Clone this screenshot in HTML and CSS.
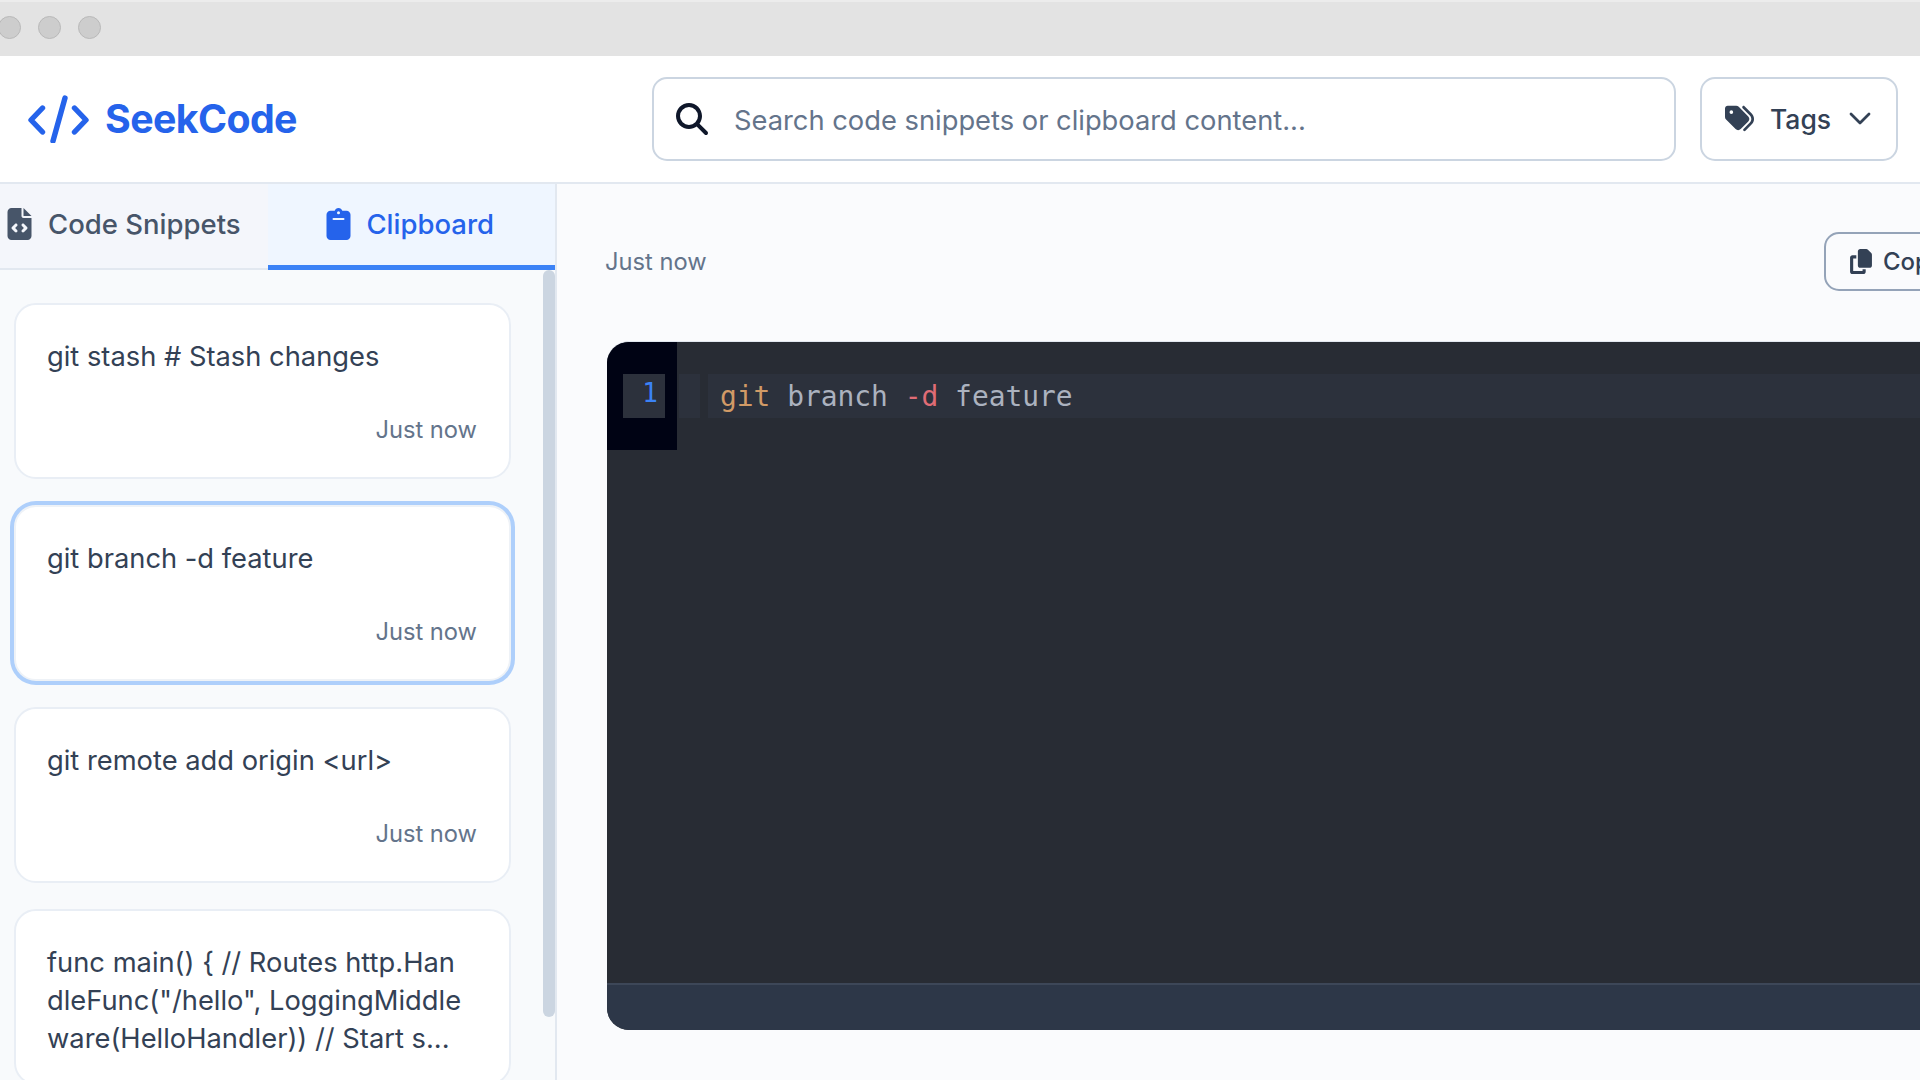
FILE: index.html
```html
<!DOCTYPE html>
<html lang="en">
<head>
<meta charset="utf-8">
<title>SeekCode</title>
<link rel="stylesheet" href="styles.css">
</head>
<body>
<div class="titlebar">
  <span class="light"></span><span class="light"></span><span class="light"></span>
</div>
<header class="header">
  <div class="brand">
    <svg class="logo" viewBox="0 0 61 48" fill="none" stroke="#2563eb" stroke-width="5.400" stroke-linecap="round" stroke-linejoin="round"><path d="M14.500 13 3 25l11.500 12"/><path d="M46.500 13 58 25 46.500 37"/><path d="M37 3 25 46"/></svg>
    <span class="brand-name">SeekCode</span>
  </div>
  <div class="search">
    <svg class="search-icon" viewBox="0 0 512 512"><path d="M416 208c0 45.900-14.900 88.300-40 122.700L502.600 457.400c12.500 12.500 12.500 32.800 0 45.300s-32.800 12.500-45.300 0L330.700 376c-34.400 25.200-76.800 40-122.700 40C93.100 416 0 322.900 0 208S93.100 0 208 0S416 93.100 416 208zM208 352a144 144 0 1 0 0-288 144 144 0 1 0 0 288z"/></svg>
    <input class="search-input" type="text" placeholder="Search code snippets or clipboard content...">
  </div>
  <button class="tags">
    <svg class="tags-icon" viewBox="0 0 512 512"><path d="M345 39.100L472.800 168.400c52.400 53 52.400 138.200 0 191.200L360.800 472.900c-9.300 9.400-24.500 9.500-33.900 .2s-9.500-24.500-.2-33.900L438.600 325.900c33.900-34.300 33.900-89.400 0-123.700L310.900 72.900c-9.300-9.400-9.200-24.600 .2-33.900s24.600-9.200 33.900 .2zM0 229.500V80C0 53.500 21.500 32 48 32H197.500c17 0 33.300 6.700 45.300 18.700l168 168c25 25 25 65.500 0 90.500L277.300 442.700c-25 25-65.500 25-90.500 0l-168-168C6.700 262.700 0 246.500 0 229.500zM144 144a32 32 0 1 0-64 0 32 32 0 1 0 64 0z"/></svg>
    <span>Tags</span>
    <svg class="chevron" viewBox="0 0 22 13" fill="none" stroke="#334155" stroke-width="2.800" stroke-linecap="round" stroke-linejoin="round"><path d="M2 2l9 9 9-9"/></svg>
  </button>
</header>
<div class="body">
  <aside class="sidebar">
    <nav class="tabs">
      <div class="tab tab-first">
        <svg class="tab-icon" viewBox="0 0 384 512" fill="#475569"><path d="M64 0C28.700 0 0 28.700 0 64V448c0 35.300 28.700 64 64 64H320c35.300 0 64-28.700 64-64V160H256c-17.700 0-32-14.300-32-32V0H64zM256 0V128H384L256 0zM153 289l-31 31 31 31c9.400 9.400 9.400 24.600 0 33.900s-24.600 9.400-33.900 0L71 337c-9.400-9.400-9.400-24.600 0-33.900l48-48c9.400-9.400 24.600-9.400 33.900 0s9.400 24.600 0 33.900zM265 255l48 48c9.400 9.400 9.400 24.600 0 33.900l-48 48c-9.400 9.400-24.600 9.400-33.900 0s-9.400-24.600 0-33.900l31-31-31-31c-9.400-9.400-9.400-24.600 0-33.900s24.600-9.400 33.900 0z"/></svg>
        <span>Code Snippets</span>
      </div>
      <div class="tab tab-active">
        <svg class="tab-icon" viewBox="0 0 384 512" fill="#2563eb"><path fill-rule="evenodd" d="M192 0c-29 0-53 19-61 45H64C29 45 0 74 0 109v339c0 35 29 64 64 64h256c35 0 64-29 64-64V109c0-35-29-64-64-64h-67C245 19 221 0 192 0zm0 52a24 24 0 1 1 0 48 24 24 0 0 1 0-48zM112 160h160a16 16 0 0 1 0 32H112a16 16 0 0 1 0-32z"/></svg>
        <span>Clipboard</span>
      </div>
    </nav>
    <div class="list-area">
      <div class="list">
        <article class="card">
          <p class="card-text">git stash # Stash changes</p>
          <p class="card-time">Just now</p>
        </article>
        <article class="card card-selected">
          <p class="card-text">git branch -d feature</p>
          <p class="card-time">Just now</p>
        </article>
        <article class="card">
          <p class="card-text">git remote add origin &lt;url&gt;</p>
          <p class="card-time">Just now</p>
        </article>
        <article class="card">
          <p class="card-text">func main() { // Routes http.Han<br>dleFunc("/hello", LoggingMiddle<br>ware(HelloHandler)) // Start s...</p>
        </article>
      </div>
      <div class="thumb"></div>
    </div>
  </aside>
  <main class="main">
    <div class="main-inner">
      <div class="toolbar">
        <span class="stamp">Just now</span>
        <button class="copy">
          <svg class="copy-icon" viewBox="0 0 448 512" fill="#334155"><path d="M208 0H332.100c12.700 0 24.900 5.100 33.900 14.100l67.900 67.900c9 9 14.100 21.200 14.100 33.900V336c0 26.500-21.500 48-48 48H208c-26.500 0-48-21.500-48-48V48c0-26.500 21.500-48 48-48zM48 128h80v64H64V448H256V416h64v48c0 26.500-21.500 48-48 48H48c-26.500 0-48-21.500-48-48V176c0-26.500 21.500-48 48-48z"/></svg>
          <span>Copy</span>
        </button>
      </div>
      <section class="editor">
        <div class="editor-body">
          <div class="gutter"><span class="line-no">1</span></div>
          <div class="code-area">
            <span class="hl-mark"></span>
            <div class="code-line"><span class="kw">git</span> branch <span class="flag">-d</span> feature</div>
          </div>
        </div>
        <div class="statusbar"></div>
      </section>
    </div>
  </main>
</div>
</body>
</html>
```

FILE: styles.css
```css
* { box-sizing: border-box; }
html, body { margin: 0; height: 100%; }
body {
  display: flex;
  flex-direction: column;
  height: 1080px;
  overflow: hidden;
  background: #fafbfd;
  font-family: Inter, "Liberation Sans", sans-serif;
  color: #334155;
}

.titlebar {
  flex: 0 0 56px;
  display: flex;
  align-items: center;
  gap: 17px;
  margin-left: -2px;
  padding-bottom: 3px;
  background: #e3e3e3;
  border-top: 2px solid #ececec;
}
.light {
  width: 23px;
  height: 23px;
  border-radius: 50%;
  background: #cdcdcd;
  border: 1px solid #b9b9b9;
}

.header {
  flex: 0 0 128px;
  display: flex;
  align-items: center;
  padding: 0 22px 1px 28px;
  background: #fff;
  border-bottom: 2px solid #e2e8f0;
}
.brand {
  display: flex;
  align-items: center;
  gap: 16px;
  width: 624px;
}
.logo { width: 61px; height: 48px; }
.brand-name {
  font-size: 39.300px;
  font-weight: 700;
  letter-spacing: -0.6px;
  color: #2563eb;
}
.search {
  flex: 1;
  height: 84px;
  display: flex;
  align-items: center;
  gap: 26px;
  padding-left: 22px;
  background: #fff;
  border: 2px solid #cbd5e1;
  border-radius: 15px;
}
.search-icon { width: 32px; height: 32px; fill: #0f172a; flex: none; }
.search-input {
  flex: 1;
  border: 0;
  outline: 0;
  background: transparent;
  font: 400 27.300px Inter, sans-serif;
  color: #334155;
  padding: 3px 0 0;
}
.search-input::placeholder { color: #64748b; opacity: 1; }
.tags {
  width: 198px;
  height: 84px;
  margin-left: 24px;
  display: flex;
  align-items: center;
  padding: 0 25px 0 23px;
  background: #fff;
  border: 2px solid #cbd5e1;
  border-radius: 15px;
  font: 500 26.500px Inter, sans-serif;
  color: #334155;
}
.tags-icon { width: 29px; height: 29px; fill: #334155; margin-right: 16px; flex: none; }
.chevron { width: 22px; height: 13px; margin-left: auto; flex: none; }

.body { flex: 1; display: flex; min-height: 0; }

.sidebar {
  width: 557px;
  flex: none;
  display: flex;
  flex-direction: column;
  background: #f8fafc;
  border-right: 2px solid #e2e8f0;
}
.tabs {
  flex: 0 0 86px;
  display: flex;
  background: #f4f6fb;
  border-bottom: 2px solid #e2e8f0;
}
.tab {
  display: flex;
  align-items: center;
  gap: 16px;
  font-size: 27.500px;
  font-weight: 500;
}
.tab-first {
  width: 268px;
  padding: 0 0 5px 7px;
  color: #475569;
}
.tab-active {
  width: 288px;
  margin-bottom: -2px;
  justify-content: center;
  gap: 15px;
  padding: 0 2px 2px 0;
  color: #2563eb;
  background: #eff6ff;
  border-bottom: 5px solid #3b82f6;
}
.tab-icon { width: 25px; height: 32px; flex: none; }

.list-area { flex: 1; display: flex; min-height: 0; overflow: hidden; }
.list {
  width: 497px;
  flex: none;
  margin-left: 14px;
  padding-top: 33px;
  display: flex;
  flex-direction: column;
  gap: 26px;
}
.card {
  flex: none;
  min-height: 176px;
  padding: 33px 32px 0 31px;
  background: #fff;
  border: 2px solid #e9eef5;
  border-radius: 22px;
}
.card-selected {
  border-color: #eef2f7;
  box-shadow: 0 0 0 4px #aecffb;
}
.card-text {
  margin: 0;
  min-height: 76px;
  font-size: 27.300px;
  line-height: 38px;
  color: #334155;
}
.card-time {
  margin: 1px 0 0;
  text-align: right;
  font-size: 23.700px;
  line-height: 30px;
  color: #64748b;
}
.thumb {
  width: 12px;
  height: 747px;
  flex: none;
  margin-left: 32px;
  background: #cbd5e1;
  border-radius: 6px;
}

.main { flex: 1; min-width: 0; overflow: hidden; }
.main-inner {
  width: 1431px;
  padding: 48px 0 0 48px;
}
.toolbar {
  height: 58px;
  display: flex;
  align-items: center;
  justify-content: space-between;
}
.stamp { font-size: 23.700px; color: #64748b; }
.copy {
  width: 164px;
  height: 59px;
  display: flex;
  align-items: center;
  gap: 11px;
  padding: 0 24px;
  background: transparent;
  border: 2px solid #94a3b8;
  border-radius: 15px;
  font: 500 24px Inter, sans-serif;
  color: #334155;
}
.copy-icon { width: 22px; height: 25px; flex: none; }

.editor {
  height: 689px;
  margin: 51px 0 0 2px;
  display: flex;
  flex-direction: column;
  background: #282c34;
  border-radius: 22px;
  border-top: 1px solid #e2e8f0;
  overflow: hidden;
}
.editor-body { flex: 1; display: flex; align-items: flex-start; }
.gutter {
  width: 70px;
  height: 108px;
  flex: none;
  padding: 32px 0 0 16px;
  background: #000314;
}
.line-no {
  display: block;
  width: 42px;
  height: 44px;
  padding-right: 7px;
  background: #2c313c;
  text-align: right;
  font: 26px/38px "DejaVu Sans Mono", monospace;
  color: #3b82f6;
}
.code-area {
  flex: 1;
  display: flex;
  gap: 8px;
  height: 44px;
  margin: 32px 0 0 2px;
}
.hl-mark { width: 21px; background: #2c313c; flex: none; }
.code-line {
  flex: 1;
  padding: 1px 0 0 12px;
  background: #2c313c;
  font: 27.900px/44px "DejaVu Sans Mono", monospace;
  color: #abb2bf;
  white-space: pre;
}
.kw { color: #d19a66; }
.flag { color: #e06c75; }
.statusbar {
  flex: 0 0 47px;
  background: #2d3748;
  border-top: 2px solid #3d4758;
}
```
